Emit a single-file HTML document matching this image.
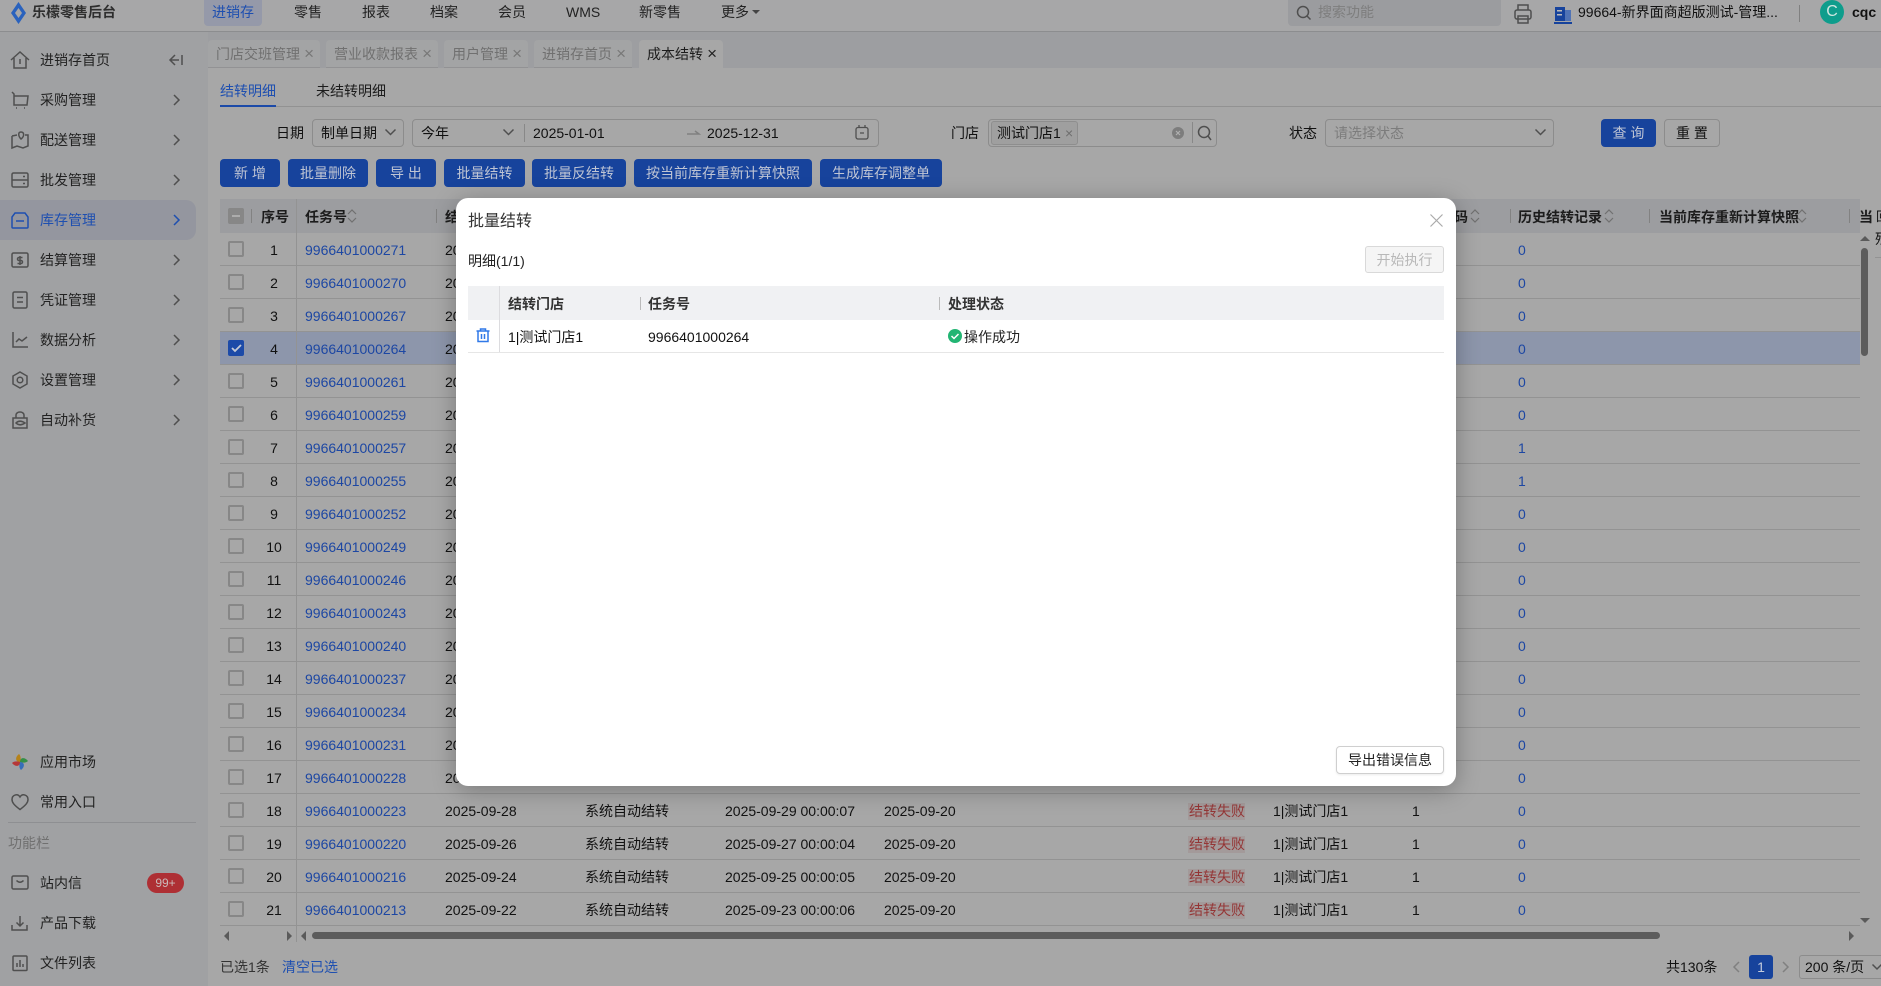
<!DOCTYPE html>
<html lang="zh-CN"><head><meta charset="utf-8"><title>成本结转</title>
<style>
*{box-sizing:border-box}
html,body{margin:0;padding:0}
body{width:1881px;height:986px;overflow:hidden;position:relative;background:#a7a7a7;font:14px/20px "Liberation Sans","Noto Sans CJK SC",sans-serif;color:#111}
.a,.a *{position:absolute}
.t{position:absolute;white-space:nowrap;height:20px;line-height:20px}
svg{position:absolute;overflow:visible}
.ic{fill:none;stroke:#4f4f4f;stroke-width:1.5}
#top{left:0;top:0;width:1881px;height:32px;background:#a7a7a8;border-bottom:1px solid #8c8d8f}
#side{left:0;top:32px;width:208px;height:954px;background:#a0a1a3}
#strip{left:208px;top:32px;width:1673px;height:36px;background:#9d9ea1}
.m{left:40px;color:#222}
.tab{position:absolute;top:40px;height:28px;background:#a3a4a5;border-radius:4px 4px 0 0;border-bottom:1px solid #929294;color:#707070;line-height:28px;padding-left:8px;white-space:nowrap}
.tab s{position:absolute;right:6px;top:0;text-decoration:none;font-size:17px;color:#777}
.bt{position:absolute;top:159px;height:28px;background:#17439c;color:#bfc5d4;border-radius:4px;text-align:center;line-height:29px;white-space:nowrap}
.bx{position:absolute;border:1px solid #8c8c8c;border-radius:4px;height:28px;top:119px}
.r{position:absolute;left:220px;width:1640px;height:33px;border-bottom:1px solid #939393}
.cb{position:absolute;left:8px;top:8px;width:16px;height:16px;border:2px solid #878787;border-radius:2px}
.r b{position:absolute;left:30px;width:48px;text-align:center;font-weight:400;top:7px;line-height:20px}
.r a{position:absolute;left:85px;top:7px;color:#1d47a3;line-height:20px}
.r u{position:absolute;left:1298px;top:7px;color:#1d47a3;text-decoration:none;line-height:20px}
.r span{position:absolute;top:7px;white-space:nowrap;line-height:20px}
.r .d{left:225px}.r .y{left:365px}.r .z{left:505px}.r .w{left:664px}
.r .f{left:968px;top:9px;height:17px;line-height:17px;padding:0 1px;width:57px;text-align:center;background:#a39a9a;color:#943636}
.r .g{left:1053px}.r .o{left:1192px}
.h{position:absolute;top:200px;font-weight:700;height:34px;line-height:34px;white-space:nowrap;color:#1c1c1c}
.sp{position:absolute;width:1px;height:14px;top:209px;background:#828282}
.sort{position:absolute;top:208px;width:10px;height:16px}
#modal{position:absolute;left:456px;top:198px;width:1000px;height:588px;background:#fff;border-radius:12px;box-shadow:0 4px 24px rgba(0,0,0,.28);color:#222}
</style></head><body>

<div class="a" id="top" style="position:absolute">
<svg style="left:10px;top:2px" width="17" height="22" viewBox="0 0 17 22"><path d="M8.500 0L16 11 8.500 22 1 11Z" fill="#2a62bd"/><path d="M8.500 6L12 11 8.500 16 5 11Z" fill="#a7a7a8"/></svg>
<span class="t" style="left:32px;top:2px;color:#2e2e2e;font-weight:700">乐檬零售后台</span>
<span style="left:204px;top:0;width:58px;height:26px;background:#9599a9;border-radius:0 0 4px 4px"></span>
<span class="t" style="left:212px;top:2px;color:#1e4fb0">进销存</span>
<span class="t" style="left:294px;top:2px;color:#222">零售</span>
<span class="t" style="left:362px;top:2px;color:#222">报表</span>
<span class="t" style="left:430px;top:2px;color:#222">档案</span>
<span class="t" style="left:498px;top:2px;color:#222">会员</span>
<span class="t" style="left:566px;top:2px;color:#222">WMS</span>
<span class="t" style="left:639px;top:2px;color:#222">新零售</span>
<span class="t" style="left:721px;top:2px;color:#222">更多</span>
<svg style="left:752px;top:10px" width="8" height="5"><path d="M0 0H8L4 4Z" fill="#444"/></svg>
<span style="left:1288px;top:0;width:213px;height:26px;background:#9b9c9f;border-radius:0 0 4px 4px"></span>
<svg class="ic" style="left:1296px;top:5px" width="16" height="16" viewBox="0 0 16 16"><circle cx="7" cy="7" r="5.500"/><path d="M11 11l3.500 3.500"/></svg>
<span class="t" style="left:1318px;top:2px;color:#7e7e7e">搜索功能</span>
<svg class="ic" style="left:1514px;top:4px" width="18" height="20" viewBox="0 0 18 20"><rect x="1" y="6" width="16" height="9" rx="2"/><path d="M4 6V1h10v5M4 12h10v7H4z"/></svg>
<svg style="left:1554px;top:6px" width="18" height="19" viewBox="0 0 18 19"><rect x="1" y="1" width="10" height="14" fill="#17439c"/><rect x="11" y="4" width="6" height="11" fill="#5073b5"/><rect x="0" y="16" width="18" height="2" fill="#17439c"/><rect x="3" y="4" width="5" height="1.500" fill="#bbb"/><rect x="3" y="8" width="5" height="1.500" fill="#bbb"/></svg>
<span class="t" style="left:1578px;top:2px;color:#111">99664-新界面商超版测试-管理...</span>
<span style="left:1799px;top:5px;width:1px;height:17px;background:#808080"></span>
<span style="left:1820px;top:0;width:24px;height:24px;border-radius:50%;background:#0e9d8c;color:#cfe7e1;text-align:center;line-height:24px;font-size:16px">C</span>
<span class="t" style="left:1852px;top:2px;font-weight:700;color:#111">cqc</span>
</div>

<div class="a" id="side" style="position:absolute"></div>
<div style="position:absolute;left:0;top:200px;width:196px;height:40px;background:#94969f;border-radius:0 10px 10px 0"></div>

<svg class="ic" style="left:10px;top:50px" width="20" height="20" viewBox="0 0 20 20"><path d="M1 10L10 2l9 8M4 8v10h12V8M10 9v5"/></svg>
<svg class="ic" style="left:10px;top:90px" width="20" height="20" viewBox="0 0 20 20"><path d="M2 2l2 2v11h13l1-9H4"/><path d="M6 18h1M14 18h1"/></svg>
<svg class="ic" style="left:10px;top:130px" width="20" height="20" viewBox="0 0 20 20"><path d="M2 6l5-1v0M2 6v12l5-2 6 2 5-2V5h-3"/><path d="M11 9c-3-3-3-7 0-7s4 4 0 7z"/></svg>
<svg class="ic" style="left:10px;top:170px" width="20" height="20" viewBox="0 0 20 20"><rect x="2" y="3" width="16" height="14" rx="1.500"/><path d="M2 10h16M13 6.500h2M13 13.500h2"/></svg>
<svg class="ic" style="left:10px;top:210px;stroke:#1e4fb0" width="20" height="20" viewBox="0 0 20 20"><path d="M5 3h10l3 4v10a1 1 0 0 1-1 1H3a1 1 0 0 1-1-1V7z"/><path d="M6 11h8"/></svg>
<svg class="ic" style="left:10px;top:250px" width="20" height="20" viewBox="0 0 20 20"><rect x="2" y="3" width="16" height="14" rx="1.500"/><path d="M12.500 7.500H9a1.300 1.300 0 0 0 0 3h2a1.300 1.300 0 0 1 0 3H7.500M10 6v9"/></svg>
<svg class="ic" style="left:10px;top:290px" width="20" height="20" viewBox="0 0 20 20"><rect x="3" y="2" width="14" height="16" rx="1.500"/><path d="M7 7.500h6M7 12h6"/></svg>
<svg class="ic" style="left:10px;top:330px" width="20" height="20" viewBox="0 0 20 20"><path d="M3 2v15h15M6 12l3-3 3 2 5-4"/></svg>
<svg class="ic" style="left:10px;top:370px" width="20" height="20" viewBox="0 0 20 20"><path d="M10 2l7 4v8l-7 4-7-4V6z"/><circle cx="10" cy="10" r="2.800"/></svg>
<svg class="ic" style="left:10px;top:410px" width="20" height="20" viewBox="0 0 20 20"><path d="M3 18V8h14v10zM6 8V5a4 3 0 0 1 8 0v3"/><path d="M6 13c3-3 6-2 9 0-3 2-6 3-9 0z"/></svg>

<span class="t m" style="top:50px">进销存首页</span>
<span class="t m" style="top:90px">采购管理</span>
<span class="t m" style="top:130px">配送管理</span>
<span class="t m" style="top:170px">批发管理</span>
<span class="t m" style="top:210px;color:#1e4fb0">库存管理</span>
<span class="t m" style="top:250px">结算管理</span>
<span class="t m" style="top:290px">凭证管理</span>
<span class="t m" style="top:330px">数据分析</span>
<span class="t m" style="top:370px">设置管理</span>
<span class="t m" style="top:410px">自动补货</span>

<svg class="ic" style="left:169px;top:55px" width="14" height="10" viewBox="0 0 14 10"><path d="M6 0L1 5l5 5M1 5h9M13 0v10"/></svg>
<svg class="ic" style="left:173px;top:95px" width="7" height="120" viewBox="0 0 7 120"><path d="M1 0l5 5-5 5M1 40l5 5-5 5M1 80l5 5-5 5"/></svg>
<svg class="ic" style="left:173px;top:215px;stroke:#1e4fb0" width="7" height="10" viewBox="0 0 7 10"><path d="M1 0l5 5-5 5"/></svg>
<svg class="ic" style="left:173px;top:255px" width="7" height="170" viewBox="0 0 7 170"><path d="M1 0l5 5-5 5M1 40l5 5-5 5M1 80l5 5-5 5M1 120l5 5-5 5M1 160l5 5-5 5"/></svg>

<svg style="left:11px;top:753px" width="18" height="18" viewBox="0 0 18 18"><path d="M9 9C4 9 4 4 8 1c2 2 2 5 1 8z" fill="#b5821a"/><path d="M9 9c0-5 5-5 8-1-2 2-5 2-8 1z" fill="#358f46"/><path d="M9 9c5 0 5 5 1 8-2-2-2-5-1-8z" fill="#366eb9"/><path d="M9 9c0 5-5 5-8 1 2-2 5-2 8-1z" fill="#b63838"/></svg>
<svg class="ic" style="left:11px;top:793px" width="18" height="18" viewBox="0 0 18 18"><path d="M9 16.500C3 12 1 9.500 1 6.500 1 2 6.500 0 9 4c2.500-4 8-2 8 2.500 0 3-2 5.500-8 10z"/></svg>
<svg class="ic" style="left:11px;top:874px" width="18" height="18" viewBox="0 0 18 18"><rect x="1" y="2" width="16" height="13" rx="1.500"/><path d="M5.500 6.500Q9 10 12.500 6.500"/></svg>
<svg class="ic" style="left:11px;top:914px" width="18" height="18" viewBox="0 0 18 18"><path d="M1 11v5h15v-5M9 2v10M5.500 8.500L9 12l3.500-3.500"/></svg>
<svg class="ic" style="left:11px;top:954px" width="18" height="18" viewBox="0 0 18 18"><rect x="2" y="2" width="14" height="14.500" rx="1"/><path d="M6 13V9M9 13V6M12 13v-3"/></svg>

<span class="t m" style="top:752px">应用市场</span>
<span class="t m" style="top:792px">常用入口</span>
<div style="position:absolute;left:8px;top:822px;width:188px;height:1px;background:#8e8f92"></div>
<span class="t" style="left:8px;top:833px;color:#707070">功能栏</span>
<span class="t m" style="top:873px">站内信</span>
<span class="t" style="left:147px;top:873px;width:37px;height:20px;border-radius:10px;background:#ae2f34;color:#cbb9b9;text-align:center;font-size:12px">99+</span>
<span class="t m" style="top:913px">产品下载</span>
<span class="t m" style="top:953px">文件列表</span>

<div class="a" id="strip" style="position:absolute"></div>
<div class="tab" style="left:208px;width:112px">门店交班管理<s>×</s></div>
<div class="tab" style="left:326px;width:112px">营业收款报表<s>×</s></div>
<div class="tab" style="left:444px;width:84px">用户管理<s>×</s></div>
<div class="tab" style="left:534px;width:98px">进销存首页<s>×</s></div>
<div class="tab" style="left:639px;width:84px;background:#a7a7a7;color:#1c1c1c;border:0">成本结转<s style="color:#222">×</s></div>

<span class="t" style="left:220px;top:81px;color:#1e4fb0">结转明细</span>
<span class="t" style="left:316px;top:81px;color:#1c1c1c">未结转明细</span>
<div style="position:absolute;left:220px;top:106px;width:1661px;height:1px;background:#929292"></div>
<div style="position:absolute;left:220px;top:105px;width:56px;height:2px;background:#1c4aa8"></div>

<span class="t" style="left:276px;top:123px">日期</span>
<div class="bx" style="left:312px;width:92px"></div>
<span class="t" style="left:321px;top:123px">制单日期</span>
<svg class="ic" style="left:385px;top:129px" width="11" height="7"><path d="M.5 .5L5.500 5.500 10.500 .5"/></svg>
<div class="bx" style="left:412px;width:467px"></div>
<span class="t" style="left:421px;top:123px">今年</span>
<svg class="ic" style="left:503px;top:129px" width="11" height="7"><path d="M.5 .5L5.500 5.500 10.500 .5"/></svg>
<div style="position:absolute;left:524px;top:124px;width:1px;height:18px;background:#888"></div>
<span class="t" style="left:533px;top:123px">2025-01-01</span>
<svg class="ic" style="left:687px;top:130px;stroke:#808080" width="13" height="5"><path d="M0 4h12L8 1"/></svg>
<span class="t" style="left:707px;top:123px">2025-12-31</span>
<svg class="ic" style="left:855px;top:125px;stroke-width:1.300" width="14" height="15" viewBox="0 0 14 15"><rect x="1" y="2.500" width="12" height="11.500" rx="2"/><path d="M4 0v3M10 0v3M5 8h4"/></svg>
<span class="t" style="left:951px;top:123px">门店</span>
<div class="bx" style="left:988px;width:229px"></div>
<div style="position:absolute;left:991px;top:121px;width:87px;height:24px;border:1px solid #8e8e8e;border-radius:3px;background:#9f9f9f"></div>
<span class="t" style="left:997px;top:123px">测试门店1</span>
<span class="t" style="left:1065px;top:123px;color:#6e6e6e">×</span>
<svg style="left:1172px;top:127px" width="12" height="12"><circle cx="6" cy="6" r="6" fill="#7d7d7d"/><path d="M4 4l4 4M8 4l-4 4" stroke="#b0b0b0" stroke-width="1.200"/></svg>
<div style="position:absolute;left:1192px;top:122px;width:1px;height:21px;background:#888"></div>
<svg class="ic" style="left:1197px;top:125px" width="15" height="16" viewBox="0 0 15 16"><circle cx="7" cy="7" r="5.500"/><path d="M11 11l3 4"/></svg>
<span class="t" style="left:1289px;top:123px">状态</span>
<div class="bx" style="left:1325px;width:229px"></div>
<span class="t" style="left:1334px;top:123px;color:#7c7c7c">请选择状态</span>
<svg class="ic" style="left:1535px;top:129px" width="11" height="7"><path d="M.5 .5L5.500 5.500 10.500 .5"/></svg>
<div class="bt" style="left:1601px;top:119px;width:55px;line-height:28px">查 询</div>
<div class="bx" style="left:1664px;width:56px;text-align:center;line-height:26px;color:#111">重 置</div>

<div class="bt" style="left:220px;width:60px">新 增</div>
<div class="bt" style="left:288px;width:80px">批量删除</div>
<div class="bt" style="left:376px;width:60px">导 出</div>
<div class="bt" style="left:444px;width:81px">批量结转</div>
<div class="bt" style="left:532px;width:94px">批量反结转</div>
<div class="bt" style="left:634px;width:178px">按当前库存重新计算快照</div>
<div class="bt" style="left:820px;width:122px">生成库存调整单</div>

<div style="position:absolute;left:220px;top:199px;width:1640px;height:34px;background:#9c9da0"></div>
<div style="position:absolute;left:228px;top:208px;width:16px;height:16px;background:#878787;border-radius:2px"></div>
<div style="position:absolute;left:232px;top:215px;width:8px;height:2px;background:#acacac"></div>
<div class="sp" style="left:251px"></div>
<span class="h" style="left:261px">序号</span>
<span class="h" style="left:305px">任务号</span>
<svg class="ic sort" style="left:347px;stroke:#707070;stroke-width:1.200"><path d="M1 6l4-4 4 4M1 10l4 4 4-4"/></svg>
<div class="sp" style="left:436px"></div>
<span class="h" style="left:445px">结转日期</span>
<span class="h" style="left:1440px">编码</span>
<svg class="ic sort" style="left:1470px;stroke:#707070;stroke-width:1.200"><path d="M1 6l4-4 4 4M1 10l4 4 4-4"/></svg>
<div class="sp" style="left:1510px"></div>
<span class="h" style="left:1518px">历史结转记录</span>
<svg class="ic sort" style="left:1604px;stroke:#707070;stroke-width:1.200"><path d="M1 6l4-4 4 4M1 10l4 4 4-4"/></svg>
<div class="sp" style="left:1649px"></div>
<span class="h" style="left:1659px">当前库存重新计算快照</span>
<svg class="ic sort" style="left:1797px;stroke:#707070;stroke-width:1.200"><path d="M1 6l4-4 4 4M1 10l4 4 4-4"/></svg>
<div class="sp" style="left:1849px"></div>
<span class="h" style="left:1859px;width:14px;overflow:hidden">当</span>
<span class="t" style="left:1876px;top:207px;width:5px;overflow:hidden;font-size:13px">回</span>
<span class="t" style="left:1875px;top:229px;width:6px;overflow:hidden">残</span>
<div style="position:absolute;left:1875px;top:257px;width:6px;height:1px;background:#939393"></div>

<div class="r" style="top:233px"><i class="cb"></i><b>1</b><a>9966401000271</a><span class="d">2025</span><u>0</u></div>
<div class="r" style="top:266px"><i class="cb"></i><b>2</b><a>9966401000270</a><span class="d">2025</span><u>0</u></div>
<div class="r" style="top:299px"><i class="cb"></i><b>3</b><a>9966401000267</a><span class="d">2025</span><u>0</u></div>
<div class="r" style="top:332px;background:#8d96ab"><i class="cb" style="background:#1c4aa8;border-color:#1c4aa8"></i><svg style="left:11px;top:12px" width="11" height="9"><path d="M1 4l3 3 6-6" fill="none" stroke="#c5cad6" stroke-width="1.800"/></svg><b>4</b><a>9966401000264</a><span class="d">2025</span><u>0</u></div>
<div class="r" style="top:365px"><i class="cb"></i><b>5</b><a>9966401000261</a><span class="d">2025</span><u>0</u></div>
<div class="r" style="top:398px"><i class="cb"></i><b>6</b><a>9966401000259</a><span class="d">2025</span><u>0</u></div>
<div class="r" style="top:431px"><i class="cb"></i><b>7</b><a>9966401000257</a><span class="d">2025</span><u>1</u></div>
<div class="r" style="top:464px"><i class="cb"></i><b>8</b><a>9966401000255</a><span class="d">2025</span><u>1</u></div>
<div class="r" style="top:497px"><i class="cb"></i><b>9</b><a>9966401000252</a><span class="d">2025</span><u>0</u></div>
<div class="r" style="top:530px"><i class="cb"></i><b>10</b><a>9966401000249</a><span class="d">2025</span><u>0</u></div>
<div class="r" style="top:563px"><i class="cb"></i><b>11</b><a>9966401000246</a><span class="d">2025</span><u>0</u></div>
<div class="r" style="top:596px"><i class="cb"></i><b>12</b><a>9966401000243</a><span class="d">2025</span><u>0</u></div>
<div class="r" style="top:629px"><i class="cb"></i><b>13</b><a>9966401000240</a><span class="d">2025</span><u>0</u></div>
<div class="r" style="top:662px"><i class="cb"></i><b>14</b><a>9966401000237</a><span class="d">2025</span><u>0</u></div>
<div class="r" style="top:695px"><i class="cb"></i><b>15</b><a>9966401000234</a><span class="d">2025</span><u>0</u></div>
<div class="r" style="top:728px"><i class="cb"></i><b>16</b><a>9966401000231</a><span class="d">2025</span><u>0</u></div>
<div class="r" style="top:761px"><i class="cb"></i><b>17</b><a>9966401000228</a><span class="d">2025</span><u>0</u></div>
<div class="r" style="top:794px"><i class="cb"></i><b>18</b><a>9966401000223</a><span class="d">2025-09-28</span><span class="y">系统自动结转</span><span class="z">2025-09-29 00:00:07</span><span class="w">2025-09-20</span><span class="f">结转失败</span><span class="g">1|测试门店1</span><span class="o">1</span><u>0</u></div>
<div class="r" style="top:827px"><i class="cb"></i><b>19</b><a>9966401000220</a><span class="d">2025-09-26</span><span class="y">系统自动结转</span><span class="z">2025-09-27 00:00:04</span><span class="w">2025-09-20</span><span class="f">结转失败</span><span class="g">1|测试门店1</span><span class="o">1</span><u>0</u></div>
<div class="r" style="top:860px"><i class="cb"></i><b>20</b><a>9966401000216</a><span class="d">2025-09-24</span><span class="y">系统自动结转</span><span class="z">2025-09-25 00:00:05</span><span class="w">2025-09-20</span><span class="f">结转失败</span><span class="g">1|测试门店1</span><span class="o">1</span><u>0</u></div>
<div class="r" style="top:893px"><i class="cb"></i><b>21</b><a>9966401000213</a><span class="d">2025-09-22</span><span class="y">系统自动结转</span><span class="z">2025-09-23 00:00:06</span><span class="w">2025-09-20</span><span class="f">结转失败</span><span class="g">1|测试门店1</span><span class="o">1</span><u>0</u></div>

<div style="position:absolute;left:296px;top:199px;width:1px;height:743px;background:#939393"></div>

<svg style="left:224px;top:931px" width="6" height="10"><path d="M5 0v10L0 5Z" fill="#5a5a5a"/></svg>
<svg style="left:287px;top:931px" width="6" height="10"><path d="M0 0v10l5-5Z" fill="#5a5a5a"/></svg>
<svg style="left:301px;top:931px" width="6" height="10"><path d="M5 0v10L0 5Z" fill="#5a5a5a"/></svg>
<div style="position:absolute;left:312px;top:932px;width:1348px;height:7px;background:#5c5c5c;border-radius:4px"></div>
<svg style="left:1849px;top:931px" width="6" height="10"><path d="M0 0v10l5-5Z" fill="#5a5a5a"/></svg>
<svg style="left:1860px;top:236px" width="10" height="6"><path d="M0 5h10L5 0Z" fill="#5a5a5a"/></svg>
<div style="position:absolute;left:1861px;top:248px;width:7px;height:108px;background:#5c5c5c;border-radius:4px"></div>
<svg style="left:1860px;top:918px" width="10" height="6"><path d="M0 0h10L5 5Z" fill="#5a5a5a"/></svg>

<span class="t" style="left:220px;top:957px;color:#333">已选1条</span>
<span class="t" style="left:282px;top:957px;color:#1e4fb0">清空已选</span>
<span class="t" style="left:1666px;top:957px">共130条</span>
<svg class="ic" style="left:1733px;top:962px;stroke:#808080" width="7" height="10"><path d="M6 0L1 5l5 5"/></svg>
<div style="position:absolute;left:1749px;top:955px;width:24px;height:24px;border-radius:3px;background:#17439c;color:#c3cbdc;text-align:center;line-height:24px">1</div>
<svg class="ic" style="left:1782px;top:962px;stroke:#808080" width="7" height="10"><path d="M1 0l5 5-5 5"/></svg>
<div style="position:absolute;left:1799px;top:955px;width:100px;height:24px;border:1px solid #8c8c8c;border-radius:3px"></div>
<span class="t" style="left:1805px;top:957px">200 条/页</span>
<svg class="ic" style="left:1872px;top:964px" width="10" height="7"><path d="M.5 .5L5 5 9.500 .5"/></svg>

<div id="modal">
<span class="t" style="left:12px;top:14px;font-size:16px;color:#333">批量结转</span>
<svg style="left:974px;top:16px" width="13" height="13"><path d="M.5 .5l12 12M12.500 .5l-12 12" stroke="#aaa" stroke-width="1.200"/></svg>
<span class="t" style="left:12px;top:53px">明细(1/1)</span>
<div style="position:absolute;left:909px;top:48px;width:79px;height:27px;background:#f5f5f5;border:1px solid #d9d9d9;border-radius:3px;color:#b8b8b8;text-align:center;line-height:26px">开始执行</div>
<div style="position:absolute;left:12px;top:88px;width:976px;height:34px;background:#f0f1f3"></div>
<div style="position:absolute;left:43px;top:88px;width:1px;height:66px;background:#dcdcdf"></div>
<div style="position:absolute;left:184px;top:99px;width:1px;height:13px;background:#bbb"></div>
<div style="position:absolute;left:483px;top:99px;width:1px;height:13px;background:#bbb"></div>
<span class="t" style="left:52px;top:96px;font-weight:700;color:#333">结转门店</span>
<span class="t" style="left:192px;top:96px;font-weight:700;color:#333">任务号</span>
<span class="t" style="left:492px;top:96px;font-weight:700;color:#333">处理状态</span>
<div style="position:absolute;left:12px;top:154px;width:976px;height:1px;background:#e6e6e6"></div>
<svg style="left:20px;top:130px" width="14" height="15" viewBox="0 0 14 15"><path d="M0.500 3h13M4.500 3V1h5v2M2 3v10.500h10V3M5.500 6v5M8.500 6v5" fill="none" stroke="#3079e8" stroke-width="1.500"/></svg>
<span class="t" style="left:52px;top:129px;color:#111">1|测试门店1</span>
<span class="t" style="left:192px;top:129px;color:#111">9966401000264</span>
<svg style="left:492px;top:131px" width="14" height="14" viewBox="0 0 14 14"><circle cx="7" cy="7" r="7" fill="#22b573"/><path d="M3.500 7l2.500 2.500 4.500-4.500" fill="none" stroke="#fff" stroke-width="1.500"/></svg>
<span class="t" style="left:508px;top:129px;color:#222">操作成功</span>
<div style="position:absolute;left:880px;top:548px;width:108px;height:28px;border:1px solid #cfcfcf;border-radius:4px;background:#fff;box-shadow:0 1px 2px rgba(0,0,0,.08);text-align:center;line-height:26px;color:#222">导出错误信息</div>
</div>
</body></html>
